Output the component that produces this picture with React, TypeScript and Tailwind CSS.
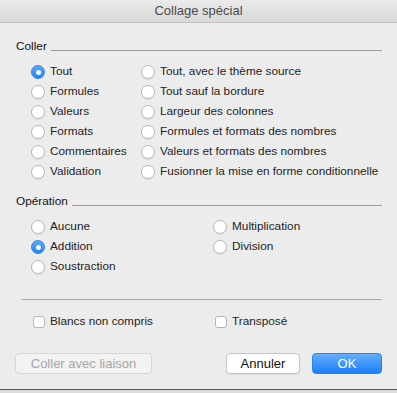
import React from "react";

const font = { fontFamily: '"Liberation Sans", Arial, sans-serif' };

const Radio = ({ checked }: { checked?: boolean }) =>
  checked ? (
    <span className="flex h-[14px] w-[14px] shrink-0 items-center justify-center rounded-full border border-[#2f86f0] bg-gradient-to-b from-[#5aa9fb] to-[#1e83f7]">
      <span className="h-[5px] w-[5px] rounded-full bg-white" />
    </span>
  ) : (
    <span className="h-[14px] w-[14px] shrink-0 rounded-full border border-[#b8b8b8] bg-white shadow-[0_1px_1px_rgba(0,0,0,0.06)]" />
  );

const RadioItem = ({ label, checked }: { label: string; checked?: boolean }) => (
  <div className="flex h-[20px] items-center gap-[5px]">
    <Radio checked={checked} />
    <span className="whitespace-nowrap text-[11.8px] text-[#1f1f1f]">{label}</span>
  </div>
);

const Check = ({ label }: { label: string }) => (
  <div className="flex h-[20px] items-center gap-[5px]">
    <span className="h-[12px] w-[12px] shrink-0 rounded-[3px] border border-[#b5b5b5] bg-white" />
    <span className="whitespace-nowrap text-[11.8px] text-[#1f1f1f]">{label}</span>
  </div>
);

const SectionTitle = ({ label }: { label: string }) => (
  <div className="flex h-[14px] items-center gap-[4px] pl-[16px] pr-[15px]">
    <span className="text-[11.8px] text-[#111]">{label}</span>
    <span className="mt-[6px] h-px flex-1 bg-[#9a9a9a]" />
  </div>
);

export default function App() {
  const leftCol = ["Tout", "Formules", "Valeurs", "Formats", "Commentaires", "Validation"];
  const rightCol = [
    "Tout, avec le thème source",
    "Tout sauf la bordure",
    "Largeur des colonnes",
    "Formules et formats des nombres",
    "Valeurs et formats des nombres",
    "Fusionner la mise en forme conditionnelle",
  ];

  return (
    <div className="flex h-[393px] w-[397px] flex-col overflow-hidden bg-[#ececec]" style={font}>
      <div className="flex h-[23px] shrink-0 items-center justify-center border-b border-[#c4c4c4] bg-gradient-to-b from-[#ebebeb] to-[#d8d8d8]">
        <span className="text-[13px] text-[#4a4a4a]">Collage spécial</span>
      </div>

      <div className="mt-[17px]">
        <SectionTitle label="Coller" />
      </div>
      <div className="mt-[8px] flex pl-[31px]">
        <div className="flex w-[110px] flex-col">
          {leftCol.map((l, i) => (
            <RadioItem key={l} label={l} checked={i === 0} />
          ))}
        </div>
        <div className="flex flex-col">
          {rightCol.map((l) => (
            <RadioItem key={l} label={l} />
          ))}
        </div>
      </div>

      <div className="mt-[13px]">
        <SectionTitle label="Opération" />
      </div>
      <div className="mt-[8px] flex pl-[31px]">
        <div className="flex w-[182px] flex-col">
          <RadioItem label="Aucune" />
          <RadioItem label="Addition" checked />
          <RadioItem label="Soustraction" />
        </div>
        <div className="flex flex-col">
          <RadioItem label="Multiplication" />
          <RadioItem label="Division" />
        </div>
      </div>

      <div className="ml-[21px] mr-[15px] mt-[22px] h-px bg-[#a8a8a8]" />

      <div className="mt-[12px] flex pl-[33px]">
        <div className="w-[182px]">
          <Check label="Blancs non compris" />
        </div>
        <Check label="Transposé" />
      </div>

      <div className="mt-[21px] flex items-center px-[15px]">
        <button
          type="button"
          className="flex h-[21px] w-[137px] items-center justify-center rounded-[4px] border border-[#d6d6d6] bg-[#f2f2f2] text-[13px] text-[#a6a6a6]"
        >
          Coller avec liaison
        </button>
        <div className="flex-1" />
        <button
          type="button"
          className="flex h-[21px] w-[74px] items-center justify-center rounded-[4px] border border-[#c6c6c6] bg-white text-[13px] text-[#111] shadow-[0_1px_1px_rgba(0,0,0,0.08)]"
        >
          Annuler
        </button>
        <button
          type="button"
          className="ml-[12px] flex h-[21px] w-[70px] items-center justify-center rounded-[4px] border border-[#2a82f0] bg-gradient-to-b from-[#62adfc] to-[#1a7ff8] text-[13px] text-white"
        >
          OK
        </button>
      </div>

      <div className="mt-auto h-[4px] border-t border-[#555] bg-[#dcdcdc]" />
    </div>
  );
}
